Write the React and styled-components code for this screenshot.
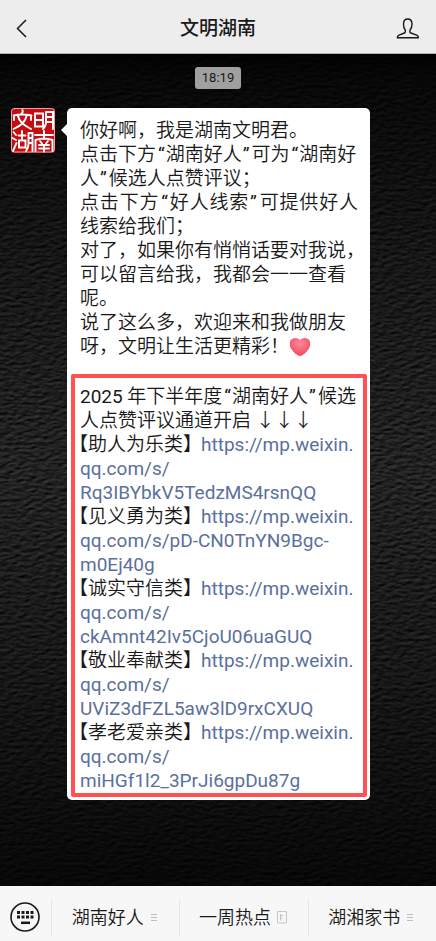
import styled, { createGlobalStyle } from "styled-components";

const GlobalStyle = createGlobalStyle`
    * {
        box-sizing: border-box;
    }

    body {
        margin: 0;
        background: #0b0b0b;
        font-family: Roboto, "Noto Sans CJK SC", sans-serif;
        color: #191919;
    }
`;

const Page = styled.div`
    min-height: 100vh;
    display: flex;
    flex-direction: column;
`;

const Header = styled.header`
    display: flex;
    align-items: center;
    justify-content: space-between;
    height: 54px;
    padding: 4px 16px 0;
    background: #ededed;
    border-bottom: 1px solid #b4b4b4;
`;

const Title = styled.h1`
    margin: 0;
    font-size: 19px;
    line-height: 24px;
    font-weight: 500;
`;

const IconButton = styled.button`
    display: flex;
    align-items: center;
    width: 24px;
    height: 32px;
    padding: 0;
    border: none;
    background: none;
    color: #191919;
    cursor: pointer;
`;

const Chat = styled.main`
    position: relative;
    isolation: isolate;
    flex: 1;
    padding: 13px 10px 86px;
    background: #0b0b0b;
`;

const Leather = styled.svg`
    position: absolute;
    inset: 0;
    z-index: -1;
    width: 100%;
    height: 100%;
`;

const Time = styled.time`
    display: block;
    width: fit-content;
    margin: 0 auto 19px;
    padding: 0 7px;
    border-radius: 3px;
    background: #a0a0a0;
    font-size: 13px;
    line-height: 22px;
`;

const Message = styled.article`
    display: flex;
    align-items: flex-start;
    gap: 12px;
    padding-right: 56px;
`;

const Avatar = styled.svg`
    flex: none;
    width: 45px;
    height: 45px;
`;

const Bubble = styled.div`
    position: relative;
    flex: 1;
    min-width: 0;
    padding: 11px 3px 3px 4px;
    border-radius: 5px;
    background: #fff;
    font-size: 19px;
    line-height: 24px;

    &::before {
        content: "";
        position: absolute;
        top: 16px;
        left: -6px;
        border: 6px solid transparent;
        border-left: none;
        border-right-color: #fff;
    }
`;

const Line = styled.p`
    margin: 0;
    font-weight: 350;
    white-space: ${({ $full }) => ($full ? "normal" : "nowrap")};
    text-align-last: ${({ $full }) => ($full ? "justify" : "left")};
`;

const Greeting = styled.div`
    padding: 0 9px;
`;

const Notice = styled.section`
    margin-top: 15px;
    padding: 7px 6px 0 5px;
    border: 4px solid #ff5151;
    border-radius: 2px;
`;

const Latin = styled.span`
    font-weight: 400;
`;

const OpenQuote = styled(Latin)`
    padding: 0 1px 0 2px;
`;

const CloseQuote = styled(Latin)`
    padding: 0 2px 0 1px;
`;

const OpenBracket = styled.span`
    margin-left: -11px;
`;

const CloseBracket = styled.span`
    margin-right: -1px;
`;

const Link = styled.a`
    color: #5b709b;
    font-weight: 400;
    text-decoration: none;
`;

const Heart = styled.svg`
    width: 22px;
    height: 20px;
    vertical-align: -4px;
`;

const Footer = styled.footer`
    display: flex;
    align-items: center;
    height: 55px;
    padding-top: 8px;
    background: #f7f7f7;
`;

const KeyboardButton = styled.button`
    display: flex;
    flex: none;
    justify-content: center;
    width: 51px;
    padding: 0 2px 2px 0;
    border: none;
    background: none;
    color: #191919;
    cursor: pointer;
`;

const Menu = styled.nav`
    flex: 1;
    display: flex;
`;

const MenuButton = styled.button`
    flex: 1;
    display: flex;
    align-items: center;
    justify-content: center;
    gap: 6px;
    height: 36px;
    padding: 0 2px 0 0;
    border: none;
    border-left: 1px solid #e6e6e6;
    background: none;
    color: #191919;
    font: inherit;
    font-size: 18px;
    font-weight: 350;
    line-height: 24px;
    white-space: nowrap;
    cursor: pointer;
`;

const Quoted = ({ children }) => (
    <>
        <OpenQuote>“</OpenQuote>
        {children}
        <CloseQuote>”</CloseQuote>
    </>
);

const categories = [
    { name: "助人为乐类", url: ["https://mp.weixin.", "qq.com/s/", "Rq3IBYbkV5TedzMS4rsnQQ"] },
    { name: "见义勇为类", url: ["https://mp.weixin.", "qq.com/s/pD-CN0TnYN9Bgc-", "m0Ej40g"] },
    { name: "诚实守信类", url: ["https://mp.weixin.", "qq.com/s/", "ckAmnt42Iv5CjoU06uaGUQ"] },
    { name: "敬业奉献类", url: ["https://mp.weixin.", "qq.com/s/", "UViZ3dFZL5aw3lD9rxCXUQ"] },
    { name: "孝老爱亲类", url: ["https://mp.weixin.", "qq.com/s/", "miHGf1l2_3PrJi6gpDu87g"] },
];

const menuItems = [
    { label: "湖南好人", icon: "list" },
    { label: "一周热点", icon: "page" },
    { label: "湖湘家书", icon: "list" },
];

const ListIcon = () => (
    <svg width="8" height="9" viewBox="0 0 8 9" stroke="#bdbdbd" fill="none">
        <path d="M1 1.5h6M1 4.5h6M1 7.5h6" />
    </svg>
);

const PageIcon = () => (
    <svg width="10" height="13" viewBox="0 0 10 13" stroke="#c4c4c4" fill="none">
        <rect x="0.5" y="0.5" width="9" height="11.5" rx="0.5" />
        <path d="M3.500 3v6.500M3.500 4.500h3M3.500 7h2" />
    </svg>
);

// Dark grained wall behind the messages
const Background = () => (
    <Leather aria-hidden="true">
        <defs>
            <filter id="grain" x="0" y="0" width="100%" height="100%" colorInterpolationFilters="sRGB">
                <feTurbulence type="fractalNoise" baseFrequency="0.14 0.3" numOctaves="2" seed="8" result="noise" />
                <feColorMatrix in="noise" type="matrix" values="0 0 0 0 0  0 0 0 0 0  0 0 0 0 0  1 0 0 0 0" />
                <feDiffuseLighting surfaceScale="0.9" diffuseConstant="0.36" lightingColor="#ffffff">
                    <feDistantLight azimuth="245" elevation="24" />
                </feDiffuseLighting>
            </filter>
            <linearGradient id="shade" x1="0" y1="0" x2="0" y2="1">
                <stop offset="0" stopColor="#000" stopOpacity="0.95" />
                <stop offset="0.03" stopColor="#000" stopOpacity="0.8" />
                <stop offset="0.25" stopColor="#000" stopOpacity="0.4" />
                <stop offset="0.5" stopColor="#000" stopOpacity="0.1" />
                <stop offset="0.75" stopColor="#000" stopOpacity="0.4" />
                <stop offset="1" stopColor="#000" stopOpacity="0.8" />
            </linearGradient>
        </defs>
        <rect width="100%" height="100%" filter="url(#grain)" />
        <rect width="100%" height="100%" fill="url(#shade)" />
    </Leather>
);

// Red seal with the four characters in white strokes
const Seal = () => (
    <Avatar viewBox="0 0 45 45" role="img" aria-label="文明湖南">
        <rect x="1" y="0" width="44" height="45" rx="3" fill="#c40d12" />
        <g fill="none" stroke="#fff" strokeWidth="1.900" strokeLinecap="round">
            <rect x="1.500" y="0.500" width="43" height="43.500" rx="3" strokeWidth="0.800" stroke="#f3c9c9" />
            <path d="M12.500 2q1 3-2 4.500M3.500 7.500q9-2 18 0M8 8c1 6 6 9 13 13M16.500 8c-1 6-6 10-13 13M4 8v4M21 8v4" />
            <path d="M25 5.500h8v13h-8zM25 12h8M36 4h7v17M36 4v10q0 4-3 7M36 9h7M36 14h7" />
            <path d="M3.500 24l2.500 3M2.500 30l3.500 2M6.500 35l-3.500 8M8.500 27.500h7M12 23v9M9 32.500h6.500v7H9zM18.500 25h4v18M18.500 25v11q0 4-2.500 7M18.500 30h4M18.500 35h4" />
            <path d="M25 27h18M34 23v8M25.500 43V32q8.500-3 17 0v11M30 33l2 2.500M38 33l-2 2.500M29 37h10M29 40.500h10M34 37v6.500" />
        </g>
    </Avatar>
);

const App = () => (
    <Page lang="zh-CN">
        <GlobalStyle />
        <Header>
            <IconButton aria-label="返回">
                <svg width="12" height="20" viewBox="0 0 12 20" fill="none" stroke="currentColor" strokeWidth="1.500">
                    <path d="M10 1L1.500 9.500l8.500 8.500" />
                </svg>
            </IconButton>
            <Title>文明湖南</Title>
            <IconButton aria-label="资料">
                <svg width="24" height="22" viewBox="0 0 24 22" fill="none" stroke="currentColor" strokeWidth="1.400" strokeLinejoin="round">
                    <path d="M9.300 12.200C7.800 10.500 7.500 8.500 7.500 6.200 7.500 3 9 1 11.800 1S16 3 16 6.200c0 2.300-.6 4.300-2.100 6v1.600c0 .6.300 1 .9 1.200l5.900 2.200c1.200.5 1.700 1.200 1.700 2.600H1.300c0-1.400.5-2.100 1.700-2.600L8.400 15c.6-.2.900-.6.9-1.200z" />
                </svg>
            </IconButton>
        </Header>
        <Chat>
            <Background />
            <Time>18:19</Time>
            <Message>
                <Seal />
                <Bubble>
                    <Greeting>
                        <Line>你好啊，我是湖南文明君。</Line>
                        <Line>点击下方<Quoted>湖南好人</Quoted>可为<OpenQuote>“</OpenQuote>湖南好</Line>
                        <Line>人<CloseQuote>”</CloseQuote>候选人点赞评议；</Line>
                        <Line $full>点击下方<Quoted>好人线索</Quoted>可提供好人</Line>
                        <Line>线索给我们；</Line>
                        <Line>对了，如果你有悄悄话要对我说，</Line>
                        <Line>可以留言给我，我都会一一查看</Line>
                        <Line>呢。</Line>
                        <Line>说了这么多，欢迎来和我做朋友</Line>
                        <Line>
                            呀，文明让生活更精彩！
                            <Heart viewBox="0 0 22 20" role="img" aria-label="爱心">
                                <defs>
                                    <radialGradient id="heart" cx="50%" cy="30%" r="65%">
                                        <stop offset="0" stopColor="#ff8a9b" />
                                        <stop offset="1" stopColor="#f24a62" />
                                    </radialGradient>
                                </defs>
                                <path fill="url(#heart)" d="M11 3C9 .5 5.500.3 3 2 .3 4 .2 8 2 11.500 4 15 8 18.500 11 19c3-.5 7-4 9-7.500 1.800-3.500 1.700-7.500-1-9.500-2.500-1.700-6-1.500-8 1z" />
                            </Heart>
                        </Line>
                    </Greeting>
                    <Notice>
                        <Line><Latin>2025</Latin> 年下半年度<Quoted>湖南好人</Quoted>候选</Line>
                        <Line>人点赞评议通道开启 ↓↓↓</Line>
                        {categories.map(({ name, url }) => (
                            <Line key={name}>
                                <OpenBracket>【</OpenBracket>
                                {name}
                                <CloseBracket>】</CloseBracket>
                                <Link href={url.join("")}>
                                    {url[0]}
                                    <br />
                                    {url[1]}
                                    <br />
                                    {url[2]}
                                </Link>
                            </Line>
                        ))}
                    </Notice>
                </Bubble>
            </Message>
        </Chat>
        <Footer>
            <KeyboardButton aria-label="键盘">
                <svg width="32" height="32" viewBox="0 0 32 32" fill="none" stroke="currentColor">
                    <circle cx="16" cy="16" r="14" strokeWidth="1.600" />
                    <path strokeWidth="3" strokeDasharray="3 1.500" d="M8 11.500h16.500M8 16h16.500" />
                    <path strokeWidth="2.500" d="M12 21.800h9" />
                </svg>
            </KeyboardButton>
            <Menu>
                {menuItems.map(({ label, icon }) => (
                    <MenuButton key={label}>
                        {label}
                        {icon === "list" ? <ListIcon /> : <PageIcon />}
                    </MenuButton>
                ))}
            </Menu>
        </Footer>
    </Page>
);

export default App;
